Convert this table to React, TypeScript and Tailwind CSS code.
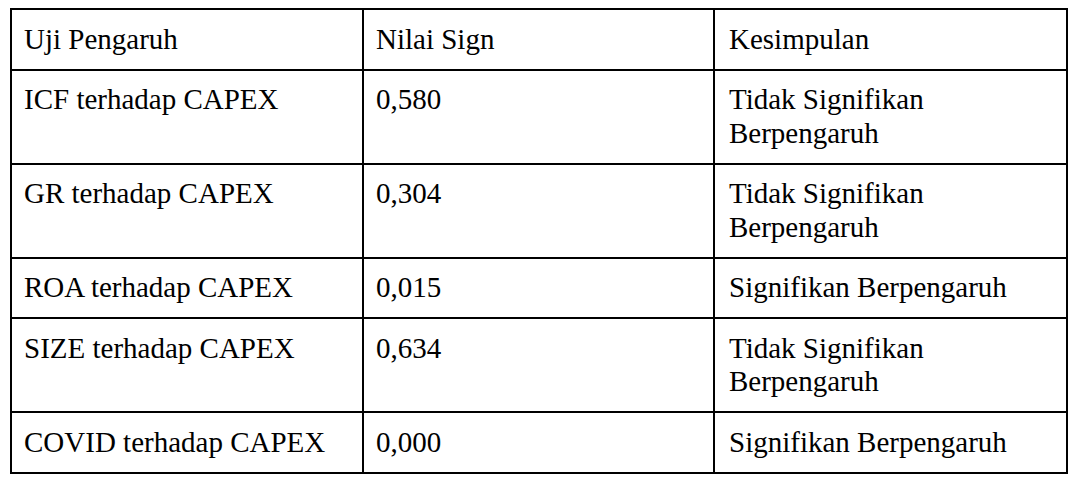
const rows: [string, string, string][] = [
  ["ICF terhadap CAPEX", "0,580", "Tidak Signifikan Berpengaruh"],
  ["GR terhadap CAPEX", "0,304", "Tidak Signifikan Berpengaruh"],
  ["ROA terhadap CAPEX", "0,015", "Signifikan Berpengaruh"],
  ["SIZE terhadap CAPEX", "0,634", "Tidak Signifikan Berpengaruh"],
  ["COVID terhadap CAPEX", "0,000", "Signifikan Berpengaruh"],
];

const cell = "border-2 border-black px-3 py-[12.5px] align-top text-left font-normal";

export default function App() {
  return (
    <div className="bg-white w-[1080px] h-[484px] pt-2 pl-[10px] text-black [font-family:'Liberation_Serif','Times_New_Roman',serif] text-[29px] leading-[33.5px]">
      <table className="w-[1056px] table-fixed border-collapse">
        <colgroup>
          <col className="w-[352px]" />
          <col className="w-[351px]" />
          <col className="w-[353px]" />
        </colgroup>
        <thead>
          <tr>
            <th className={cell}>Uji Pengaruh</th>
            <th className={cell}>Nilai Sign</th>
            <th className={`${cell} pl-[14px]`}>Kesimpulan</th>
          </tr>
        </thead>
        <tbody>
          {rows.map(([uji, nilai, kes]) => (
            <tr key={uji}>
              <td className={cell}>{uji}</td>
              <td className={cell}>{nilai}</td>
              <td className={`${cell} pl-[14px]`}>{kes}</td>
            </tr>
          ))}
        </tbody>
      </table>
    </div>
  );
}
